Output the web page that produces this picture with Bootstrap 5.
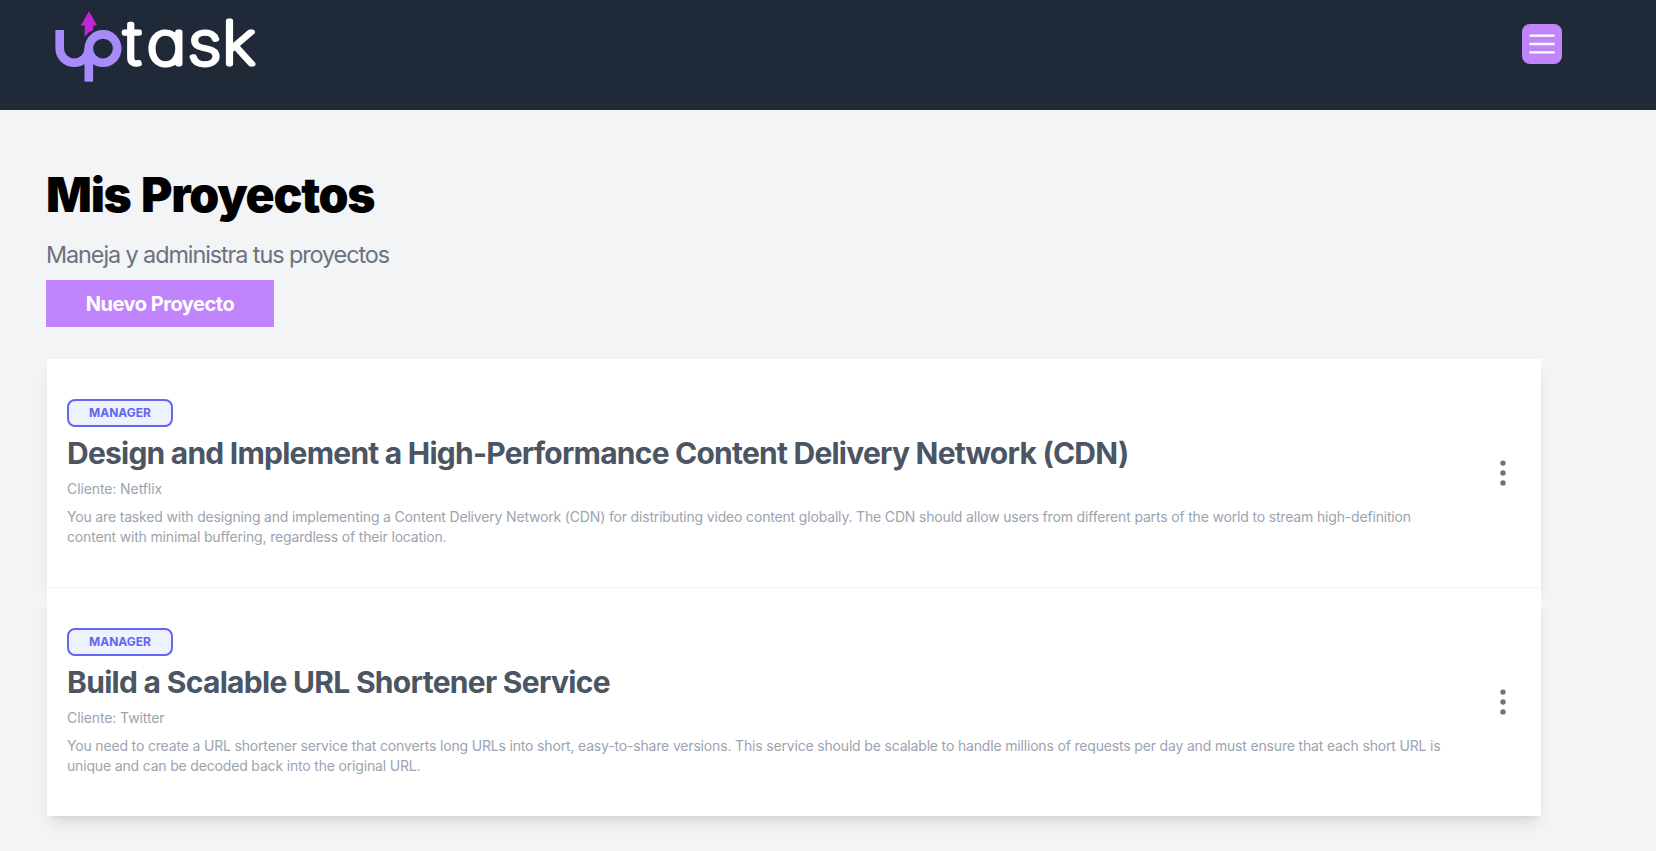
<!DOCTYPE html>
<html lang="es">
<head>
<meta charset="utf-8">
<meta name="viewport" content="width=device-width, initial-scale=1">
<title>UpTask</title>
<link href="https://cdn.jsdelivr.net/npm/bootstrap@5.3.0/dist/css/bootstrap.min.css" rel="stylesheet">
<style>
body{background:#f3f4f6;font-family:Inter,"Liberation Sans",sans-serif;line-height:1.5;min-height:851px}
.shell{width:1536px;margin-left:26px}
.topbar{background:#1f2937;height:110px}
.logo{display:block;margin-left:20px}
.logo text{font-family:Inter,sans-serif;font-weight:100;font-size:59px;font-feature-settings:"cv11";fill:#fff;stroke:#fff;stroke-width:5.3px;stroke-linejoin:round;vector-effect:non-scaling-stroke}
.menu-btn{width:40px;height:40px;margin-top:24px;border-radius:8px;background:#c084fc;padding:4px;border:0}
.menu-btn svg,.dots svg{display:block}
.content{padding:61px 20px 0}
h1{font-size:48px;line-height:48px;font-weight:900;color:#000;margin:0;letter-spacing:-1.25px;word-spacing:2px}
.lede{font-size:23.4px;line-height:32px;font-weight:400;color:#6b7280;margin:20px 0 0;letter-spacing:-1.08px}
.new-btn{background:#c084fc;color:#fff;font-size:20px;line-height:23px;font-weight:700;width:228px;height:47px;margin-top:9px;padding-top:2px;letter-spacing:-.47px}
.projects{margin-top:31px;border:1px solid #f3f4f6}
.project{position:relative;background:#fff;padding:40px 20px;height:229px}
.project:first-child{z-index:0;height:228px;box-shadow:0 10px 15px -3px rgba(0,0,0,.1),0 4px 6px -4px rgba(0,0,0,.1)}
.project+.project{z-index:1;border-top:1px solid #f3f4f6}
.project+.project::before{content:"";position:absolute;inset:0;pointer-events:none;box-shadow:0 10px 15px -3px rgba(0,0,0,.1),0 4px 6px -4px rgba(0,0,0,.1);clip-path:polygon(-30px 20px,1530px 20px,1530px 270px,-30px 270px)}
.role{width:106px;height:28px;border:2px solid #6366f1;border-radius:8px;background:#eef2ff;color:#6366f1;font-size:12px;font-weight:700;line-height:16px}
.title{font-size:30px;line-height:36px;font-weight:700;color:#4b5563;margin:8px 0 0;letter-spacing:-.77px}
.project+.project .title{letter-spacing:-.7px}
.meta{font-size:14px;line-height:20px;color:#9ca3af;margin:8px 0 0;letter-spacing:-.17px}
.client{letter-spacing:-.1px}
.body-col{width:1394px}
.dots{width:36px;height:36px;color:#6b7280;margin-top:56px;border:0;background:none;padding:0}
</style>
</head>
<body>
<header class="topbar">
<div class="shell d-flex justify-content-between align-items-start">
<svg class="logo" width="230" height="100" viewBox="46 0 230 100" role="img" aria-label="uptask">
<g fill="none" stroke="#a78bfa" stroke-width="8.6"><path d="M59.7 30V48.5a14.5 14.2 0 0 0 29.1 0"/><ellipse cx="103" cy="48.6" rx="14.2" ry="14.2"/><path d="M88.8 48.5V81.7"/></g>
<path fill="#1f2937" d="M84 28h11l-2 2.800Q87 33 84.400 39z"/>
<path fill="#c026d3" d="M89 11.300 97 25.500H93.300V30Q88 32 84.700 37V25.500H80.700z"/>
<text y="64.100" x="109 129 165 195" transform="scale(1.14 1)">task</text>
</svg>
<button class="menu-btn" aria-label="Menú"><svg width="32" height="32" viewBox="0 0 20 20" stroke="#fff" stroke-width="1.5" stroke-linecap="round"><path d="M2.750 4.750h14.500M2.750 10h14.500M2.750 15.250h14.500"/></svg></button>
</div>
</header>
<main class="shell content">
<h1>Mis Proyectos</h1>
<p class="lede">Maneja y administra tus proyectos</p>
<a class="new-btn d-flex align-items-center justify-content-center text-decoration-none">Nuevo Proyecto</a>
<ul class="projects list-unstyled mb-0">
<li class="project d-flex justify-content-between">
<div class="body-col">
<div class="role d-flex align-items-center justify-content-center">MANAGER</div>
<h2 class="title">Design and Implement a High-Performance Content Delivery Network (CDN)</h2>
<p class="meta client">Cliente: Netflix</p>
<p class="meta">You are tasked with designing and implementing a Content Delivery Network (CDN) for distributing video content globally. The CDN should allow users from different parts of the world to stream high-definition<br>content with minimal buffering, regardless of their location.</p>
</div>
<button class="dots" aria-label="Opciones"><svg width="36" height="36" viewBox="0 0 20 20" fill="currentColor"><circle cx="10" cy="4.500" r="1.500"/><circle cx="10" cy="10" r="1.500"/><circle cx="10" cy="15.500" r="1.500"/></svg></button>
</li>
<li class="project d-flex justify-content-between">
<div class="body-col">
<div class="role d-flex align-items-center justify-content-center">MANAGER</div>
<h2 class="title">Build a Scalable URL Shortener Service</h2>
<p class="meta client">Cliente: Twitter</p>
<p class="meta">You need to create a URL shortener service that converts long URLs into short, easy-to-share versions. This service should be scalable to handle millions of requests per day and must ensure that each short URL is<br>unique and can be decoded back into the original URL.</p>
</div>
<button class="dots" aria-label="Opciones"><svg width="36" height="36" viewBox="0 0 20 20" fill="currentColor"><circle cx="10" cy="4.500" r="1.500"/><circle cx="10" cy="10" r="1.500"/><circle cx="10" cy="15.500" r="1.500"/></svg></button>
</li>
</ul>
</main>
<script src="https://cdn.jsdelivr.net/npm/bootstrap@5.3.0/dist/js/bootstrap.bundle.min.js"></script>
</body>
</html>
